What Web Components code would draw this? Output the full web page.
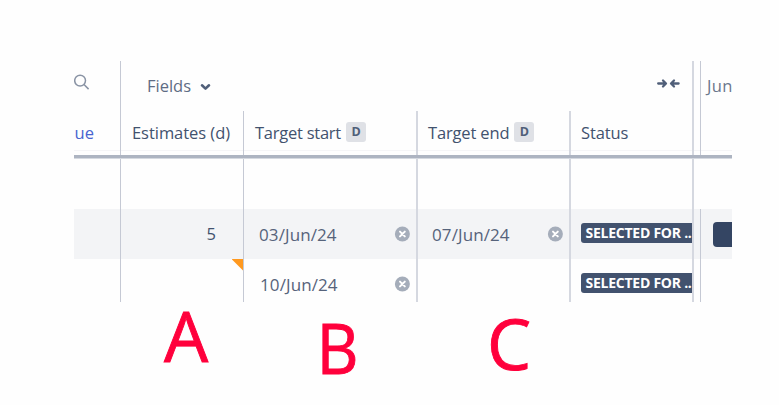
<!DOCTYPE html>
<html lang="en">
<head>
<meta charset="utf-8">
<title>Plan fields</title>
<style>
    body {
        margin: 0;
        height: 405px;
        overflow: hidden;
        background: #fefefe;
        font-family: "Open Sans", "Noto Sans", sans-serif;
        font-size: 16.5px;
        color: #42526e;
    }
</style>
</head>
<body>
<plan-board>
    <board-row slot="head" class="tools">
        <board-cell><search-icon></search-icon></board-cell>
        <board-cell class="wide" style="--pad: 26px"><fields-button>Fields</fields-button></board-cell>
        <board-cell class="end thick" style="--pad: 12px"><collapse-icon></collapse-icon></board-cell>
        <board-cell></board-cell>
        <board-cell class="last" style="--pad: 6px; --up: 2px; color: #6b778c; letter-spacing: .3px">Jun</board-cell>
    </board-row>
    <board-row slot="head" class="labels">
        <board-cell class="end" style="--pad: 26px; --up: 2px; color: #4864d0">ue</board-cell>
        <board-cell style="--pad: 11px; --up: 2px; letter-spacing: -.05px">Estimates (d)</board-cell>
        <board-cell class="thick" style="--pad: 11px; --up: 2px; letter-spacing: -.25px">Target start<date-badge>D</date-badge></board-cell>
        <board-cell class="thick" style="--pad: 10px; --up: 2px; letter-spacing: -.15px">Target end<date-badge>D</date-badge></board-cell>
        <board-cell class="thick" style="--pad: 10px; --up: 2px; letter-spacing: -.1px">Status</board-cell>
        <board-cell></board-cell>
        <board-cell class="last"></board-cell>
    </board-row>

    <board-row>
        <board-cell></board-cell>
        <board-cell></board-cell>
        <board-cell class="thick"></board-cell>
        <board-cell class="thick"></board-cell>
        <board-cell class="thick"></board-cell>
        <board-cell class="last"></board-cell>
        <board-cell class="last"></board-cell>
    </board-row>
    <board-row class="active">
        <board-cell></board-cell>
        <board-cell class="end" style="--pad: 27px; --up: 2px">5</board-cell>
        <board-cell class="thick"><date-value style="--left: 15px">03/Jun/24</date-value></board-cell>
        <board-cell class="thick"><date-value style="--left: 14px">07/Jun/24</date-value></board-cell>
        <board-cell class="thick"><status-lozenge>SELECTED FOR ..</status-lozenge></board-cell>
        <board-cell></board-cell>
        <board-cell class="last"><time-bar></time-bar></board-cell>
    </board-row>
    <board-row>
        <board-cell></board-cell>
        <board-cell class="end"><change-marker></change-marker></board-cell>
        <board-cell class="thick"><date-value style="--left: 16px">10/Jun/24</date-value></board-cell>
        <board-cell class="thick"></board-cell>
        <board-cell class="thick"><status-lozenge>SELECTED FOR ..</status-lozenge></board-cell>
        <board-cell></board-cell>
        <board-cell class="last"></board-cell>
    </board-row>
</plan-board>
<mark-letter style="left: 164px; top: 301px">A</mark-letter>
<mark-letter style="left: 315px; top: 313px; transform: scaleX(.93)">B</mark-letter>
<mark-letter style="left: 487px; top: 309px">C</mark-letter>

<script>
// Small helper: open shadow root filled from a template
function render(element, html) {
    const template = document.createElement('template');
    template.innerHTML = html;
    element.attachShadow({ mode: 'open' }).appendChild(template.content.cloneNode(true));
}

class PlanBoard extends HTMLElement {
    constructor() {
        super();
        render(this, `
            <style>
                :host {
                    display: block;
                    width: 658px;
                    height: 241px;
                    margin: 61px 0 0 74px;
                    overflow: hidden;
                }

                .head {
                    height: 94px;
                    border-bottom: 3px solid #adb4c1;
                    box-shadow: 0 1px 0 #d5d9e0;
                    margin-bottom: 1px;
                    background: linear-gradient(#f5f5f7, #f5f5f7) 0 89px / 100% 1px no-repeat;
                }
            </style>
            <div class="head"><slot name="head"></slot></div>
            <slot></slot>
        `);
    }
}

class BoardRow extends HTMLElement {
    constructor() {
        super();
        render(this, `
            <style>
                :host {
                    display: grid;
                    grid-template-columns: 47px 123px 174px 153px 123px 7px 31px;
                    height: 50px;
                }

                :host(.tools) {
                    grid-template-columns: 47px 296px 277px 7px 31px;
                }

                :host(.labels) {
                    height: 44px;
                }

                :host(.active) {
                    background: #f3f4f6;
                }
            </style>
            <slot></slot>
        `);
    }
}

class BoardCell extends HTMLElement {
    constructor() {
        super();
        render(this, `
            <style>
                :host {
                    display: flex;
                    align-items: center;
                    box-sizing: border-box;
                    min-width: 0;
                    padding-left: var(--pad, 0);
                    padding-bottom: var(--up, 0);
                    border-right: 1px solid #c5c9d4;
                    overflow: hidden;
                    white-space: nowrap;
                }

                :host(.end) {
                    justify-content: flex-end;
                    padding-left: 0;
                    padding-right: var(--pad, 0);
                }

                :host(.thick) {
                    border-right: 2px solid #d5d8e0;
                }

                :host(.wide),
                :host(.last) {
                    border-right: 0;
                }
            </style>
            <slot></slot>
        `);
    }
}

class SearchIcon extends HTMLElement {
    constructor() {
        super();
        render(this, `
            <style>
                :host { display: block; height: 16px; margin-bottom: 8px; }
                svg { display: block; }
            </style>
            <svg width="16" height="16" viewBox="0 0 16 16" fill="none" stroke="#8993a4" stroke-width="1.5">
                <circle cx="6.1" cy="6.6" r="5.4"/>
                <path d="M10 10.5L14.6 15.1"/>
            </svg>
        `);
    }
}

class FieldsButton extends HTMLElement {
    constructor() {
        super();
        render(this, `
            <style>
                :host {
                    display: flex;
                    align-items: center;
                    gap: 9px;
                    color: #5e6c84;
                }

                span { padding-bottom: 2px; }
            </style>
            <span><slot></slot></span>
            <svg width="12" height="10" viewBox="0 0 12 10" fill="none" stroke="#505f79" stroke-width="2.6" stroke-linecap="round" stroke-linejoin="round">
                <path d="M2 4.3L5.5 7.6L9 4.3"/>
            </svg>
        `);
    }
}

class CollapseIcon extends HTMLElement {
    constructor() {
        super();
        render(this, `
            <style>
                :host { display: block; margin-bottom: 5px; }
                svg { display: block; }
            </style>
            <svg width="24" height="11" viewBox="0 0 24 11" fill="none" stroke="#505f79" stroke-width="2.3" stroke-linecap="round" stroke-linejoin="round">
                <path d="M2.2 5.5H9.5M7 2.5L10 5.5L7 8.5M22.6 5.5H15.4M18 2.5L15 5.5L18 8.5"/>
            </svg>
        `);
    }
}

class DateBadge extends HTMLElement {
    constructor() {
        super();
        render(this, `
            <style>
                :host {
                    display: block;
                    width: 20px;
                    height: 20px;
                    margin-left: 5px;
                    border-radius: 3px;
                    background: #dfe1e6;
                    font-size: 12.5px;
                    font-weight: 700;
                    line-height: 20px;
                    text-align: center;
                    color: #505f79;
                }
            </style>
            <slot></slot>
        `);
    }
}

class DateValue extends HTMLElement {
    constructor() {
        super();
        render(this, `
            <style>
                :host {
                    display: flex;
                    flex: 1;
                    align-items: center;
                    justify-content: space-between;
                    padding: 0 6px 0 var(--left);
                    font-size: 17px;
                    letter-spacing: .1px;
                    color: #56637b;
                }

                span { padding-top: 1px; }
            </style>
            <span><slot></slot></span>
            <svg width="16" height="16" viewBox="0 0 16 16">
                <circle cx="8.4" cy="8" r="7.5" fill="#a5adba"/>
                <path d="M6 5.6L10.8 10.4M10.8 5.6L6 10.4" stroke="#fff" stroke-width="2" stroke-linecap="round"/>
            </svg>
        `);
    }
}

class StatusLozenge extends HTMLElement {
    constructor() {
        super();
        render(this, `
            <style>
                :host {
                    display: block;
                    flex: 1;
                    height: 20px;
                    margin: 0 0 2px 10px;
                    padding-left: 4.5px;
                    border-radius: 3px 0 0 3px;
                    background: #42526e;
                    font-size: 14px;
                    font-weight: 700;
                    letter-spacing: -.25px;
                    line-height: 20px;
                    color: #fff;
                }
            </style>
            <slot></slot>
        `);
    }
}

class ChangeMarker extends HTMLElement {
    constructor() {
        super();
        render(this, `
            <style>
                :host {
                    display: block;
                    align-self: flex-start;
                    width: 11.5px;
                    height: 11.5px;
                    background: #ff991f;
                    clip-path: polygon(0 0, 100% 0, 100% 100%);
                }
            </style>
        `);
    }
}

class TimeBar extends HTMLElement {
    constructor() {
        super();
        render(this, `
            <style>
                :host {
                    display: block;
                    flex: 1;
                    height: 25px;
                    margin-left: 11.5px;
                    border-radius: 4px 0 0 4px;
                    background: #344563;
                }
            </style>
        `);
    }
}

// Red annotation letters placed over the page
class MarkLetter extends HTMLElement {
    constructor() {
        super();
        render(this, `
            <style>
                :host {
                    position: absolute;
                    font-size: 70px;
                    line-height: 68px;
                    color: #ff003c;
                    -webkit-text-stroke: .9px #ff003c;
                }
            </style>
            <slot></slot>
        `);
    }
}

customElements.define('plan-board', PlanBoard);
customElements.define('board-row', BoardRow);
customElements.define('board-cell', BoardCell);
customElements.define('search-icon', SearchIcon);
customElements.define('fields-button', FieldsButton);
customElements.define('collapse-icon', CollapseIcon);
customElements.define('date-badge', DateBadge);
customElements.define('date-value', DateValue);
customElements.define('status-lozenge', StatusLozenge);
customElements.define('change-marker', ChangeMarker);
customElements.define('time-bar', TimeBar);
customElements.define('mark-letter', MarkLetter);
</script>
</body>
</html>
